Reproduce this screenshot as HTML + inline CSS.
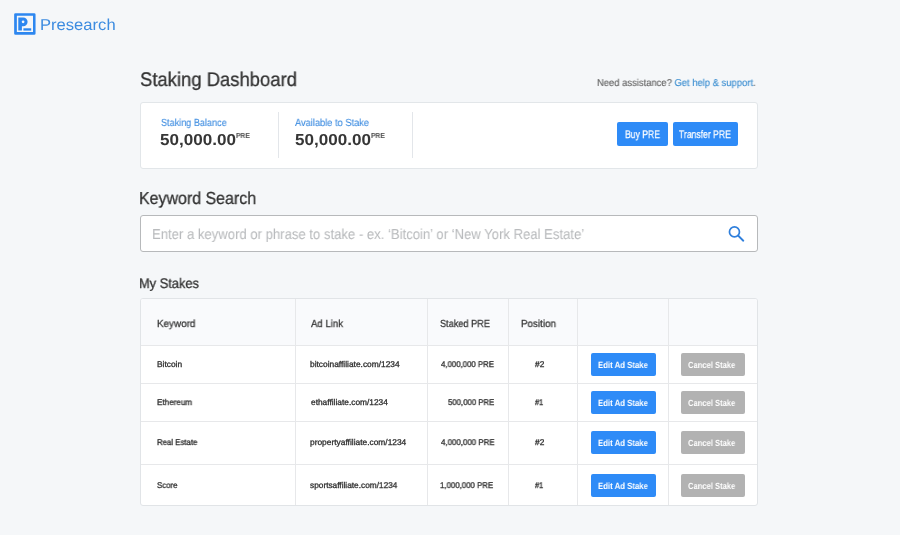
<!DOCTYPE html>
<html><head><meta charset="utf-8">
<style>
*{box-sizing:border-box;margin:0;padding:0}
html,body{width:900px;height:535px;overflow:hidden;background:#f5f7f9;font-family:"Liberation Sans",sans-serif;color:#333}
.t{position:absolute;white-space:nowrap;transform-origin:0 50%;text-rendering:geometricPrecision;will-change:transform;font-family:"Liberation Sans",sans-serif}
.abs{position:absolute}
.card{position:absolute;left:140px;top:102px;width:618px;height:67px;background:#fff;border:1px solid #e2e6e9;border-radius:3px}
.vdiv{position:absolute;width:1px;background:#e3e6ea;top:112px;height:46px}
.btn{position:absolute;background:#2e8bf7;border-radius:2px}
.search{position:absolute;left:140px;top:215px;width:618px;height:37px;background:#fff;border:1px solid #b7b9bb;border-radius:3px}
.table{position:absolute;left:140px;top:298px;width:618px;height:208px;background:#fff;border:1px solid #e1e4e7;border-radius:3px;overflow:hidden}
.thead{position:absolute;left:0;top:0;width:616px;height:46px;background:#f9fafc}
.hl{position:absolute;left:0;width:616px;height:1px;background:#e7e8ea}
.vl{position:absolute;top:0;width:1px;height:206px;background:#e7e8ea}
.eb{width:65px;height:23px;left:591px}
.cb{width:64px;height:23px;left:681px;background:#b2b2b2}
</style></head><body>
<svg class="abs" style="left:12px;top:11px;width:26px;height:26px" viewBox="12 11 26 26"><path fill="#2d87f0" fill-rule="evenodd" d="M15.450000000000001 13.3H34.25a1.3 1.3 0 0 1 1.3 1.3V33.45a1.3 1.3 0 0 1 -1.3 1.3H15.450000000000001a1.3 1.3 0 0 1 -1.3 -1.3V14.600000000000001a1.3 1.3 0 0 1 1.3 -1.3zM16.85 15.85V32.05H33.0V15.85z"/><path fill="#2d87f0" fill-rule="evenodd" d="M18.3 17.4H23.200000000000003a4.4 4.4 0 0 1 0 8.8H21.9V30.6H18.3zM24.450000000000003 21.85a1.35 1.35 0 1 0 -2.7 0a1.35 1.35 0 1 0 2.7 0z"/><rect x="23.4" y="28.3" width="7.80" height="2.30" fill="#2d87f0"/></svg>
<div class="card"></div>
<div class="vdiv" style="left:278px"></div>
<div class="vdiv" style="left:412px"></div>
<div class="btn" style="left:617px;top:122px;width:51px;height:24px"></div>
<div class="btn" style="left:673px;top:122px;width:65px;height:24px"></div>
<div class="search"></div>
<svg class="abs" style="left:726px;top:223px;width:22px;height:22px" viewBox="726 223 22 22"><circle cx="734.45" cy="231.9" r="5.0" fill="none" stroke="#2f7fdc" stroke-width="1.7"/><path d="M738.3 235.800L743.300 240.700" stroke="#2f7fdc" stroke-width="1.900" stroke-linecap="round"/></svg>
<div class="table">
 <div class="thead"></div>
 <div class="hl" style="top:46px"></div><div class="hl" style="top:84px"></div><div class="hl" style="top:122px"></div><div class="hl" style="top:165px"></div>
 <div class="vl" style="left:154px"></div><div class="vl" style="left:286px"></div><div class="vl" style="left:367px"></div><div class="vl" style="left:436px"></div><div class="vl" style="left:527px"></div>
</div>
<div class="btn eb" style="top:353px"></div><div class="btn cb" style="top:353px"></div>
<div class="btn eb" style="top:391px"></div><div class="btn cb" style="top:391px"></div>
<div class="btn eb" style="top:431px"></div><div class="btn cb" style="top:431px"></div>
<div class="btn eb" style="top:474px"></div><div class="btn cb" style="top:474px"></div>
<div class="t" id="brand" style="left:40px;top:18px;font-size:15.8px;line-height:15.8px;color:#3d8ce0;font-weight:400;-webkit-text-stroke:0.0px;transform:scaleX(1.0501)">Presearch</div>
<div class="t" id="h1" style="left:140px;top:71px;font-size:19.7px;line-height:19.7px;color:#333;font-weight:400;-webkit-text-stroke:0.3px;transform:scaleX(0.9371)">Staking Dashboard</div>
<div class="t" id="help" style="left:597px;top:79px;font-size:10px;line-height:10px;color:#666;font-weight:400;-webkit-text-stroke:0.15px;transform:scaleX(0.9418)">Need assistance? <span style="color:#3d8fd1">Get help &amp; support</span>.</div>
<div class="t" id="lbl1" style="left:161px;top:119px;font-size:10.3px;line-height:10.3px;color:#3d8ce0;font-weight:400;-webkit-text-stroke:0.1px;transform:scaleX(0.8830)">Staking Balance</div>
<div class="t" id="val1" style="left:160px;top:133px;font-size:15.9px;line-height:15.9px;color:#363636;font-weight:700;-webkit-text-stroke:0px;transform:scaleX(1.0754)">50,000.00</div>
<div class="t" id="pre1" style="left:236px;top:132px;font-size:7.3px;line-height:7.3px;color:#484848;font-weight:700;-webkit-text-stroke:0px;transform:scaleX(0.9218)">PRE</div>
<div class="t" id="lbl2" style="left:295px;top:119px;font-size:10.3px;line-height:10.3px;color:#3d8ce0;font-weight:400;-webkit-text-stroke:0.1px;transform:scaleX(0.9003)">Available to Stake</div>
<div class="t" id="val2" style="left:295px;top:133px;font-size:15.9px;line-height:15.9px;color:#363636;font-weight:700;-webkit-text-stroke:0px;transform:scaleX(1.0754)">50,000.00</div>
<div class="t" id="pre2" style="left:371px;top:132px;font-size:7.3px;line-height:7.3px;color:#484848;font-weight:700;-webkit-text-stroke:0px;transform:scaleX(0.9218)">PRE</div>
<div class="t" id="b1" style="left:625px;top:130px;font-size:11px;line-height:11px;color:#fff;font-weight:400;-webkit-text-stroke:0.25px;transform:scaleX(0.7848)">Buy PRE</div>
<div class="t" id="b2" style="left:679px;top:130px;font-size:11px;line-height:11px;color:#fff;font-weight:400;-webkit-text-stroke:0.25px;transform:scaleX(0.7823)">Transfer PRE</div>
<div class="t" id="h2" style="left:139px;top:190px;font-size:17.4px;line-height:17.4px;color:#333;font-weight:400;-webkit-text-stroke:0.3px;transform:scaleX(0.9176)">Keyword Search</div>
<div class="t" id="ph" style="left:152px;top:228px;font-size:14.5px;line-height:14.5px;color:#b9bbbd;font-weight:400;-webkit-text-stroke:0.05px;transform:scaleX(0.9039)">Enter a keyword or phrase to stake - ex. ‘Bitcoin’ or ‘New York Real Estate’</div>
<div class="t" id="h3" style="left:139px;top:277px;font-size:13.9px;line-height:13.9px;color:#333;font-weight:400;-webkit-text-stroke:0.3px;transform:scaleX(0.9232)">My Stakes</div>
<div class="t" id="th1" style="left:157px;top:320px;font-size:10.3px;line-height:10.3px;color:#333;font-weight:400;-webkit-text-stroke:0.25px;transform:scaleX(0.9586)">Keyword</div>
<div class="t" id="th2" style="left:311px;top:320px;font-size:10.3px;line-height:10.3px;color:#333;font-weight:400;-webkit-text-stroke:0.25px;transform:scaleX(0.9311)">Ad Link</div>
<div class="t" id="th3" style="left:440px;top:320px;font-size:10.3px;line-height:10.3px;color:#333;font-weight:400;-webkit-text-stroke:0.25px;transform:scaleX(0.8896)">Staked PRE</div>
<div class="t" id="th4" style="left:521px;top:320px;font-size:10.3px;line-height:10.3px;color:#333;font-weight:400;-webkit-text-stroke:0.25px;transform:scaleX(0.9533)">Position</div>
<div class="t" id="k0" style="left:157px;top:360px;font-size:8.3px;line-height:8.3px;color:#2e2e2e;font-weight:400;-webkit-text-stroke:0.3px;transform:scaleX(1.0077)">Bitcoin</div>
<div class="t" id="a0" style="left:310px;top:360px;font-size:8.3px;line-height:8.3px;color:#2e2e2e;font-weight:400;-webkit-text-stroke:0.3px;transform:scaleX(1.0090)">bitcoinaffiliate.com/1234</div>
<div class="t" id="s0" style="left:441px;top:360px;font-size:8.3px;line-height:8.3px;color:#2e2e2e;font-weight:400;-webkit-text-stroke:0.3px;transform:scaleX(0.9415)">4,000,000 PRE</div>
<div class="t" id="p0" style="left:535px;top:360px;font-size:8.3px;line-height:8.3px;color:#2e2e2e;font-weight:400;-webkit-text-stroke:0.3px;transform:scaleX(1.0025)">#2</div>
<div class="t" id="e0" style="left:598px;top:361px;font-size:9px;line-height:9px;color:#fff;font-weight:700;-webkit-text-stroke:0px;transform:scaleX(0.8644)">Edit Ad Stake</div>
<div class="t" id="c0" style="left:688px;top:361px;font-size:9px;line-height:9px;color:#fff;font-weight:700;-webkit-text-stroke:0px;transform:scaleX(0.8433)">Cancel Stake</div>
<div class="t" id="k1" style="left:157px;top:398px;font-size:8.3px;line-height:8.3px;color:#2e2e2e;font-weight:400;-webkit-text-stroke:0.3px;transform:scaleX(0.9764)">Ethereum</div>
<div class="t" id="a1" style="left:311px;top:398px;font-size:8.3px;line-height:8.3px;color:#2e2e2e;font-weight:400;-webkit-text-stroke:0.3px;transform:scaleX(1.0064)">ethaffiliate.com/1234</div>
<div class="t" id="s1" style="left:448px;top:398px;font-size:8.3px;line-height:8.3px;color:#2e2e2e;font-weight:400;-webkit-text-stroke:0.3px;transform:scaleX(0.9380)">500,000 PRE</div>
<div class="t" id="p1" style="left:535px;top:398px;font-size:8.3px;line-height:8.3px;color:#2e2e2e;font-weight:400;-webkit-text-stroke:0.3px;transform:scaleX(0.8999)">#1</div>
<div class="t" id="e1" style="left:598px;top:399px;font-size:9px;line-height:9px;color:#fff;font-weight:700;-webkit-text-stroke:0px;transform:scaleX(0.8644)">Edit Ad Stake</div>
<div class="t" id="c1" style="left:688px;top:399px;font-size:9px;line-height:9px;color:#fff;font-weight:700;-webkit-text-stroke:0px;transform:scaleX(0.8433)">Cancel Stake</div>
<div class="t" id="k2" style="left:157px;top:438px;font-size:8.3px;line-height:8.3px;color:#2e2e2e;font-weight:400;-webkit-text-stroke:0.3px;transform:scaleX(0.9412)">Real Estate</div>
<div class="t" id="a2" style="left:310px;top:438px;font-size:8.3px;line-height:8.3px;color:#2e2e2e;font-weight:400;-webkit-text-stroke:0.3px;transform:scaleX(1.0100)">propertyaffiliate.com/1234</div>
<div class="t" id="s2" style="left:441px;top:438px;font-size:8.3px;line-height:8.3px;color:#2e2e2e;font-weight:400;-webkit-text-stroke:0.3px;transform:scaleX(0.9520)">4,000,000 PRE</div>
<div class="t" id="p2" style="left:535px;top:438px;font-size:8.3px;line-height:8.3px;color:#2e2e2e;font-weight:400;-webkit-text-stroke:0.3px;transform:scaleX(1.0025)">#2</div>
<div class="t" id="e2" style="left:598px;top:439px;font-size:9px;line-height:9px;color:#fff;font-weight:700;-webkit-text-stroke:0px;transform:scaleX(0.8644)">Edit Ad Stake</div>
<div class="t" id="c2" style="left:688px;top:439px;font-size:9px;line-height:9px;color:#fff;font-weight:700;-webkit-text-stroke:0px;transform:scaleX(0.8433)">Cancel Stake</div>
<div class="t" id="k3" style="left:157px;top:481px;font-size:8.3px;line-height:8.3px;color:#2e2e2e;font-weight:400;-webkit-text-stroke:0.3px;transform:scaleX(0.9460)">Score</div>
<div class="t" id="a3" style="left:310px;top:481px;font-size:8.3px;line-height:8.3px;color:#2e2e2e;font-weight:400;-webkit-text-stroke:0.3px;transform:scaleX(0.9982)">sportsaffiliate.com/1234</div>
<div class="t" id="s3" style="left:440px;top:481px;font-size:8.3px;line-height:8.3px;color:#2e2e2e;font-weight:400;-webkit-text-stroke:0.3px;transform:scaleX(0.9446)">1,000,000 PRE</div>
<div class="t" id="p3" style="left:535px;top:481px;font-size:8.3px;line-height:8.3px;color:#2e2e2e;font-weight:400;-webkit-text-stroke:0.3px;transform:scaleX(0.8999)">#1</div>
<div class="t" id="e3" style="left:598px;top:482px;font-size:9px;line-height:9px;color:#fff;font-weight:700;-webkit-text-stroke:0px;transform:scaleX(0.8644)">Edit Ad Stake</div>
<div class="t" id="c3" style="left:688px;top:482px;font-size:9px;line-height:9px;color:#fff;font-weight:700;-webkit-text-stroke:0px;transform:scaleX(0.8433)">Cancel Stake</div>
</body></html>
